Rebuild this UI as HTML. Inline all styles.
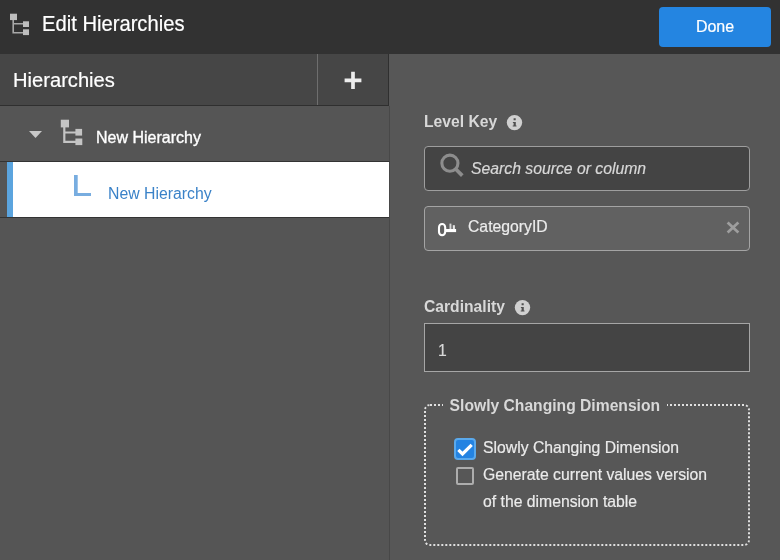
<!DOCTYPE html>
<html><head><meta charset="utf-8">
<style>
*{box-sizing:border-box;margin:0;padding:0}
html,body{width:780px;height:560px;overflow:hidden;background:#575757;font-family:"Liberation Sans",sans-serif;}
div,svg{position:absolute}
#title,#done,.t,.lbl,.tx{will-change:transform}
#top{left:0;top:0;width:780px;height:54px;background:#323232;}
#title{left:42px;top:12px;font-size:20.2px;color:#fff;line-height:24px;white-space:nowrap;transform:scaleY(1.06);transform-origin:0 19px;-webkit-text-stroke:0.2px #fff}
#done{left:659px;top:7px;width:112px;height:40px;background:#2485e1;border-radius:4px;color:#fff;font-size:16px;line-height:40px;text-align:center;-webkit-text-stroke:0.2px #fff}
#lh{left:0;top:54px;width:389px;height:52px;background:#464646;border-bottom:1px solid #2f2f2f;border-right:1px solid #2f2f2f}
#lh .t{left:13px;top:14px;font-size:20.15px;color:#fff;line-height:24px;white-space:nowrap;transform:scaleY(1.04);transform-origin:0 19px;-webkit-text-stroke:0.2px #fff}
#lh .sep{left:317px;top:0;width:1px;height:51px;background:#6e6e6e;}
#lbody{left:0;top:106px;width:390px;height:454px;background:#555;border-right:1px solid #484848}
#row1{left:0;top:106px;width:390px;height:56px;background:#555555;border-bottom:1px solid #333;border-right:1px solid #484848}
#row1 .t{left:96px;top:22px;font-size:16px;color:#fff;line-height:20px;-webkit-text-stroke:0.35px #fff;white-space:nowrap}
#row2{left:0;top:162px;width:389px;height:56px;background:linear-gradient(90deg,#555 7px,#fff 7px);border-bottom:1px solid #333;}
#row2 .bar{left:7px;top:0;width:6px;height:55px;background:#5ba4de;}
#row2 .t{left:108px;top:22px;font-size:15.8px;color:#3a82c8;line-height:20px;white-space:nowrap}
.lbl{font-size:15.67px;font-weight:bold;color:#d8d8d8;line-height:20px;white-space:nowrap}
.box{left:424px;width:326px;border:1px solid #9e9e9e;}
.tx{-webkit-text-stroke:0.18px currentColor;font-size:15.75px;line-height:20px;white-space:nowrap}
</style></head><body>
<div id="top">
<svg style="left:9px;top:13px" width="22" height="24" viewBox="0 0 22 24"><g fill="#bdbdbd"><rect x="1" y="0.7" width="7" height="6.4"/><rect x="14" y="8.3" width="6" height="5.7"/><rect x="14" y="16.3" width="6" height="5.8"/></g><path d="M4.2 7V19.7H14M4.2 10.7H14" stroke="#bdbdbd" stroke-opacity="0.85" stroke-width="1.6" fill="none"/></svg>
<div id="title">Edit Hierarchies</div>
<div id="done">Done</div>
</div>
<div id="lbody"></div>
<div id="lh"><div class="t">Hierarchies</div><div class="sep"></div>
 <svg style="left:344px;top:17px" width="18" height="19" viewBox="0 0 18 19"><path d="M9 0.8V18M0.6 9.4H17.4" stroke="#ededed" stroke-width="3.7"/></svg></div>
<div id="row1">
  <svg style="left:29px;top:25.2px" width="14" height="8" viewBox="0 0 14 8"><path d="M0 0H13L6.5 7Z" fill="#c8c8c8"/></svg>
  <svg style="left:60px;top:13px" width="24" height="28" viewBox="0 0 24 28"><g fill="#c4c4c4"><rect x="0.8" y="0.7" width="8.2" height="7.7"/><rect x="15.4" y="9.9" width="6.7" height="6.7"/><rect x="15.4" y="19.5" width="6.9" height="6.6"/></g><path d="M4.3 8V22.8H16M4.3 13.5H16" stroke="#c4c4c4" stroke-width="2.2" fill="none"/></svg>
  <div class="t">New Hierarchy</div>
</div>
<div id="row2"><div class="bar"></div>
  <svg style="left:73px;top:13px" width="20" height="24" viewBox="0 0 20 24"><path d="M1 0H4.7V18H18V21.1H1Z" fill="#78ade0"/></svg>
  <div class="t">New Hierarchy</div>
</div>
<div class="lbl" style="left:423.5px;top:111.5px">Level Key</div>
<svg style="left:507px;top:115px" width="15" height="16" viewBox="0 0 15 16" overflow="visible"><circle cx="7.5" cy="7.6" r="7.7" fill="#d0d0d0"/><path d="M5.9 6.9H8.8V10.5H9.5V11.6H5.7V10.5H6.6V7.9H5.9Z M6.6 3.3H8.7V5.2H6.6Z" fill="#505050"/></svg>
<div class="box" style="top:146px;height:45px;background:#444;border-radius:4px;"></div>
<svg style="left:439px;top:152.4px" width="26" height="26" viewBox="0 0 26 26"><circle cx="10.9" cy="11.2" r="8.05" stroke="#8d8d8d" stroke-width="3.1" fill="none"/><path d="M16.4 16.7L23.3 23.6" stroke="#8d8d8d" stroke-width="3.7"/></svg>
<div class="tx" style="left:470.6px;top:159px;font-style:italic;color:#d8d8d8;">Search source or column</div>
<div class="box" style="top:206px;height:45px;background:#616161;border-radius:4px;border-color:#a4a4a4"></div>
<svg style="left:436px;top:221px" width="24" height="18" viewBox="0 0 24 18"><rect x="3" y="3" width="6.2" height="11.2" rx="3.1" ry="3.4" stroke="#fff" stroke-width="2.1" fill="none"/><rect x="10" y="8" width="10.1" height="3.1" fill="#fff"/><rect x="13.5" y="2.6" width="1.9" height="5.6" fill="#fff" fill-opacity="0.75"/><rect x="16.8" y="4.2" width="2.1" height="4" fill="#fff" fill-opacity="0.85"/></svg>
<div class="tx" style="left:468px;top:217px;color:#ececec;">CategoryID</div>
<svg style="left:726px;top:221px" width="14" height="13" viewBox="0 0 14 13"><path d="M1.6 1.4L12.4 11.6M12.4 1.4L1.6 11.6" stroke="#9e9e9e" stroke-width="2.7"/></svg>
<div class="lbl" style="left:423.5px;top:296.5px">Cardinality</div>
<svg style="left:515px;top:300px" width="15" height="16" viewBox="0 0 15 16" overflow="visible"><circle cx="7.5" cy="7.6" r="7.7" fill="#d0d0d0"/><path d="M5.9 6.9H8.8V10.5H9.5V11.6H5.7V10.5H6.6V7.9H5.9Z M6.6 3.3H8.7V5.2H6.6Z" fill="#505050"/></svg>
<div class="box" style="top:323px;height:49px;background:#444;border-color:#a6a6a6"></div>
<div class="tx" style="left:437.7px;top:341px;color:#d8d8d8;">1</div>
<div style="left:424px;top:404px;width:326px;height:142px;border:2px dotted #e0e0e0;border-radius:6px;"></div>
<div class="lbl" style="left:443px;top:396px;background:#575757;padding:0 7px 0 6.6px;">Slowly Changing Dimension</div>
<div style="left:454px;top:438px;width:22px;height:22px;background:#2383e2;border:2px solid #5aa9ec;border-radius:4px;"></div>
<svg style="left:454px;top:438px" width="22" height="22" viewBox="0 0 22 22"><path d="M4.4 11.9L8.5 16L17.7 6.8" stroke="#fff" stroke-width="3.2" fill="none"/></svg>
<div class="tx" style="left:483px;top:438px;color:#ebebeb;">Slowly Changing Dimension</div>
<div style="left:456px;top:467px;width:18px;height:18px;border:2px solid #adadad;border-radius:2px;"></div>
<div class="tx" style="left:483px;top:465px;color:#ebebeb;">Generate current values version</div>
<div class="tx" style="left:483px;top:492px;color:#ebebeb;">of the dimension table</div>
</body></html>
